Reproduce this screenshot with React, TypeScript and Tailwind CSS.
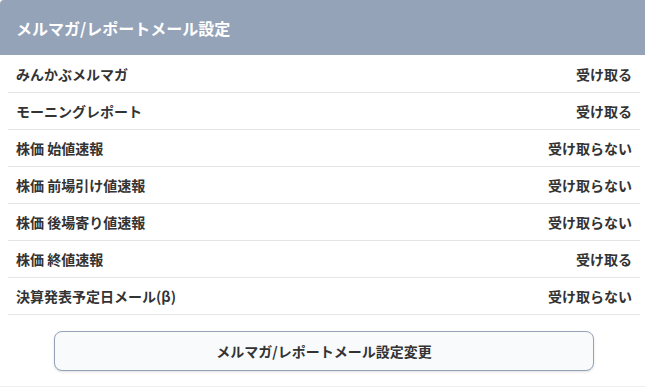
import React from "react";

const rows: [string, string][] = [
  ["みんかぶメルマガ", "受け取る"],
  ["モーニングレポート", "受け取る"],
  ["株価 始値速報", "受け取らない"],
  ["株価 前場引け値速報", "受け取らない"],
  ["株価 後場寄り値速報", "受け取らない"],
  ["株価 終値速報", "受け取る"],
  ["決算発表予定日メール(β)", "受け取らない"],
];

export default function App() {
  return (
    <div
      className="w-[645px] h-[388px] overflow-hidden bg-white"
      style={{ fontFamily: '"Noto Sans CJK JP", "Noto Sans", sans-serif' }}
    >
      <div className="w-[648px] h-[387px] bg-white rounded-t-[4px] border-b border-[#eeeeee] flex flex-col">
        <div className="h-[55px] bg-[#94a3b8] rounded-t-[4px] flex items-center px-4">
          <h2 className="text-white text-[16px] font-bold leading-none">メルマガ/レポートメール設定</h2>
        </div>
        <div className="px-2 pt-[1px]">
          {rows.map(([label, value]) => (
            <div
              key={label}
              className="h-[37px] flex items-center justify-between px-2 border-b border-[#e5e5e5] text-[14px] font-bold text-[#333333]"
            >
              <span>{label}</span>
              <span>{value}</span>
            </div>
          ))}
        </div>
        <div className="px-[54px] pt-[16px]">
          <button className="w-full h-[40px] rounded-lg border border-[#94a3b8] bg-[#f8fafc] shadow-sm text-[14px] font-bold text-[#333333]">
            メルマガ/レポートメール設定変更
          </button>
        </div>
      </div>
    </div>
  );
}
